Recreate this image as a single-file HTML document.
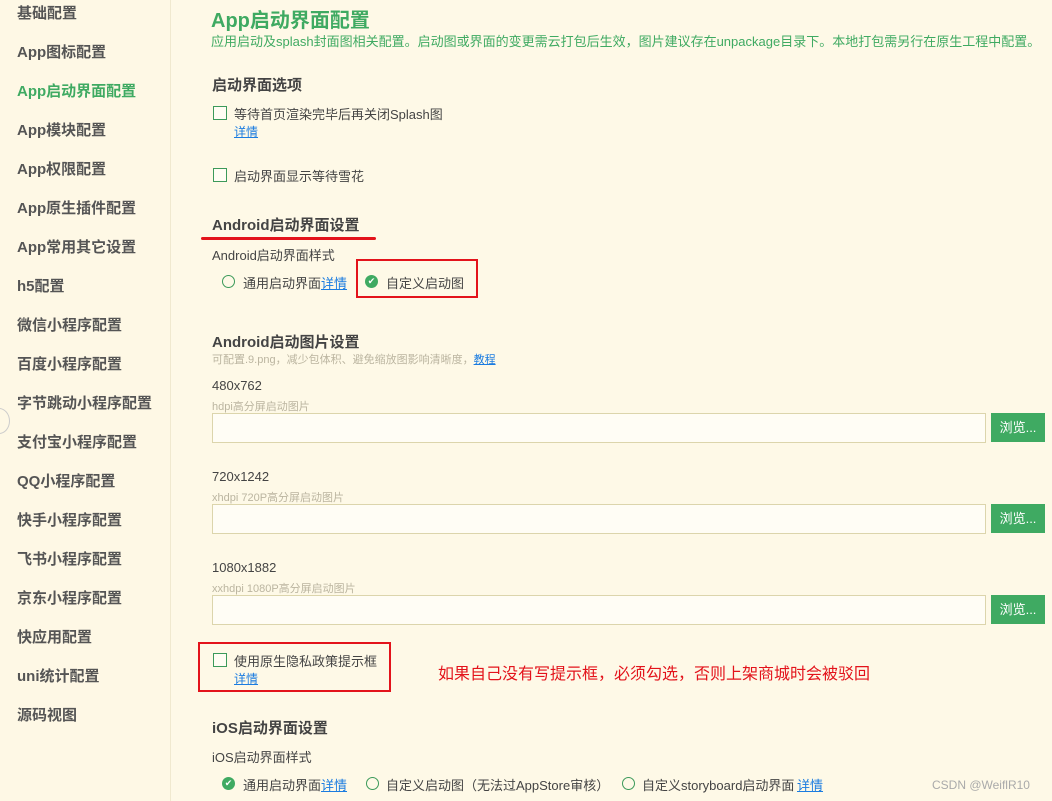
<!DOCTYPE html>
<html><head><meta charset="utf-8"><style>
body{margin:0;width:1052px;height:801px;overflow:hidden;background:#fef9e7;font-family:"Liberation Sans","Noto Sans CJK SC",sans-serif;position:relative;color:#444}
.a{position:absolute;white-space:nowrap}
.side{position:absolute;left:0;top:0;width:170px;height:801px;border-right:1px solid #f0e9cf;background:#fef8e5}
.si{position:absolute;left:17px;font-size:15px;font-weight:bold;color:#555}
.cb{position:absolute;width:12px;height:12px;border:1px solid #3c9a5a;background:#fffdf3}
.lk{color:#1b7ce0;text-decoration:underline;font-size:12px}
.t{font-size:13px;color:#444}
.h{font-size:15px;font-weight:bold;color:#444}
.g{font-size:11px;color:#bbb5a0}
.inp{position:absolute;left:212px;width:772px;height:28px;border:1px solid #dcd5ac;background:#fffdf5}
.btn{position:absolute;left:991px;width:54px;height:29px;background:#3faa62;color:#fff;font-size:13px;line-height:29px;text-align:center}
.rd{position:absolute;width:11px;height:11px;border:1px solid #3c9a5a;border-radius:50%}
.rdc{position:absolute;width:13px;height:13px;border-radius:50%;background:#3faa62;color:#fff;font-size:9px;line-height:13px;text-align:center}
.red{position:absolute;border:2px solid #e3131b}
</style></head><body>
<div class="side">
<div class="si" style="top:2px">基础配置</div>
<div class="si" style="top:41px">App图标配置</div>
<div class="si" style="top:80px;color:#3faa62">App启动界面配置</div>
<div class="si" style="top:119px">App模块配置</div>
<div class="si" style="top:158px">App权限配置</div>
<div class="si" style="top:197px">App原生插件配置</div>
<div class="si" style="top:236px">App常用其它设置</div>
<div class="si" style="top:275px">h5配置</div>
<div class="si" style="top:314px">微信小程序配置</div>
<div class="si" style="top:353px">百度小程序配置</div>
<div class="si" style="top:392px">字节跳动小程序配置</div>
<div class="si" style="top:431px">支付宝小程序配置</div>
<div class="si" style="top:470px">QQ小程序配置</div>
<div class="si" style="top:509px">快手小程序配置</div>
<div class="si" style="top:548px">飞书小程序配置</div>
<div class="si" style="top:587px">京东小程序配置</div>
<div class="si" style="top:626px">快应用配置</div>
<div class="si" style="top:665px">uni统计配置</div>
<div class="si" style="top:704px">源码视图</div>
</div>
<div class="a" style="left:-12px;top:408px;width:20px;height:24px;border:1px solid #ccc;border-radius:50%"></div>

<div class="a" style="left:211px;top:4px;font-size:20px;font-weight:bold;color:#3faa62">App启动界面配置</div>
<div class="a" style="left:211px;top:31px;font-size:13px;color:#3faa62">应用启动及splash封面图相关配置。启动图或界面的变更需云打包后生效，图片建议存在unpackage目录下。本地打包需另行在原生工程中配置。</div>

<div class="a h" style="left:212px;top:74px">启动界面选项</div>
<div class="cb" style="left:213px;top:106px"></div>
<div class="a t" style="left:234px;top:104px">等待首页渲染完毕后再关闭Splash图</div>
<div class="a lk" style="left:234px;top:123px">详情</div>
<div class="cb" style="left:213px;top:168px"></div>
<div class="a t" style="left:234px;top:166px">启动界面显示等待雪花</div>

<div class="a h" style="left:212px;top:214px">Android启动界面设置</div>
<div class="a" style="left:201px;top:237px;width:175px;height:3px;background:#e3131b;border-radius:2px"></div>
<div class="a t" style="left:212px;top:245px">Android启动界面样式</div>
<div class="rd" style="left:222px;top:275px"></div>
<div class="a t" style="left:243px;top:273px">通用启动界面</div>
<div class="a lk" style="left:321px;top:273px;font-size:13px">详情</div>
<div class="rdc" style="left:365px;top:275px">✔</div>
<div class="a t" style="left:386px;top:273px">自定义启动图</div>
<div class="red" style="left:356px;top:259px;width:118px;height:35px"></div>

<div class="a h" style="left:212px;top:331px">Android启动图片设置</div>
<div class="a g" style="left:212px;top:351px">可配置.9.png，减少包体积、避免缩放图影响清晰度，<span class="lk" style="font-size:11px">教程</span></div>
<div class="a t" style="left:212px;top:378px">480x762</div>
<div class="a g" style="left:212px;top:398px">hdpi高分屏启动图片</div>
<div class="inp" style="top:413px"></div><div class="btn" style="top:413px">浏览...</div>
<div class="a t" style="left:212px;top:469px">720x1242</div>
<div class="a g" style="left:212px;top:489px">xhdpi 720P高分屏启动图片</div>
<div class="inp" style="top:504px"></div><div class="btn" style="top:504px">浏览...</div>
<div class="a t" style="left:212px;top:560px">1080x1882</div>
<div class="a g" style="left:212px;top:580px">xxhdpi 1080P高分屏启动图片</div>
<div class="inp" style="top:595px"></div><div class="btn" style="top:595px">浏览...</div>

<div class="cb" style="left:213px;top:653px"></div>
<div class="a t" style="left:234px;top:651px">使用原生隐私政策提示框</div>
<div class="a lk" style="left:234px;top:670px">详情</div>
<div class="red" style="left:198px;top:642px;width:189px;height:46px"></div>
<div class="a" style="left:438px;top:660px;font-size:16px;color:#e3131b">如果自己没有写提示框，必须勾选，否则上架商城时会被驳回</div>

<div class="a h" style="left:212px;top:717px">iOS启动界面设置</div>
<div class="a t" style="left:212px;top:747px">iOS启动界面样式</div>
<div class="rdc" style="left:222px;top:777px">✔</div>
<div class="a t" style="left:243px;top:775px">通用启动界面</div>
<div class="a lk" style="left:321px;top:775px;font-size:13px">详情</div>
<div class="rd" style="left:366px;top:777px"></div>
<div class="a t" style="left:386px;top:775px">自定义启动图（无法过AppStore审核）</div>
<div class="rd" style="left:622px;top:777px"></div>
<div class="a t" style="left:642px;top:775px">自定义storyboard启动界面</div>
<div class="a lk" style="left:797px;top:775px;font-size:13px">详情</div>
<div class="a" style="left:932px;top:778px;font-size:12px;color:#aaa">CSDN @WeiflR10</div>
</body></html>
